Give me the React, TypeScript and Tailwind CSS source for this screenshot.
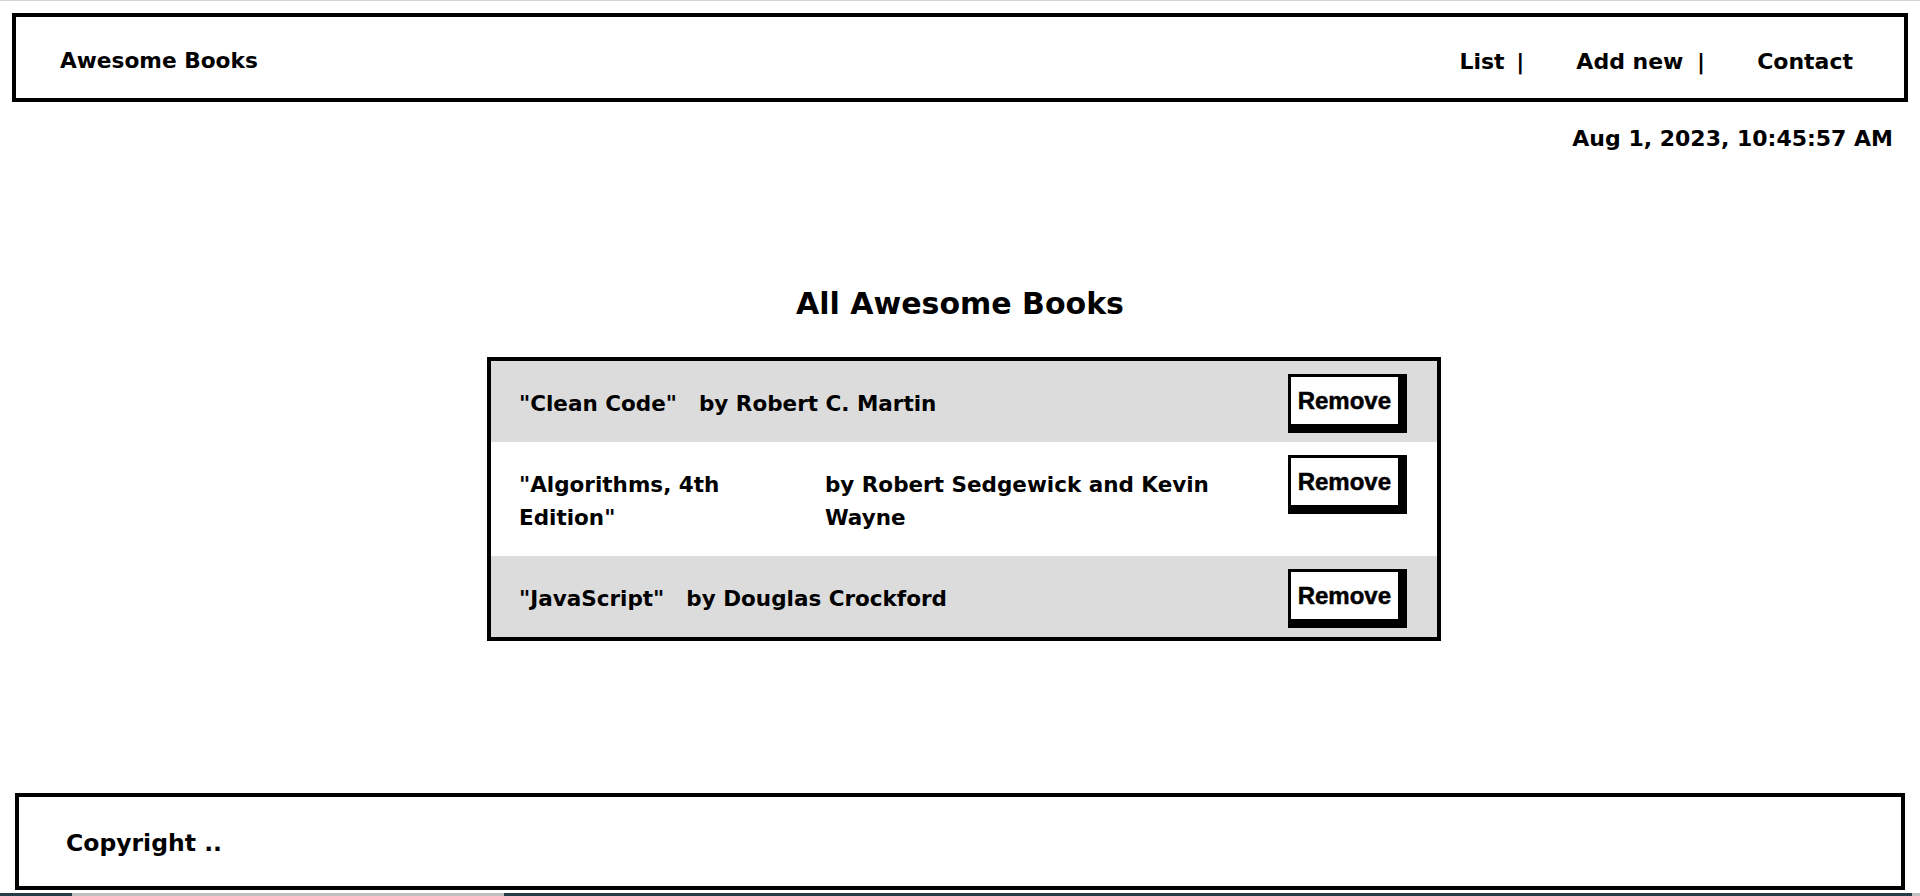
import React from "react";

type Book = {
  title: string;
  author: string;
};

const books: Book[] = [
  { title: "Clean Code", author: "Robert C. Martin" },
  { title: "Algorithms, 4th Edition", author: "Robert Sedgewick and Kevin Wayne" },
  { title: "JavaScript", author: "Douglas Crockford" },
];

export default function App() {
  return (
    <div className="h-[896px] overflow-hidden bg-white text-black font-['DejaVu_Sans',sans-serif] font-bold">
      <div className="h-px bg-[#d3d3d3]" />

      {/* header */}
      <header className="mx-[12px] mt-[12px] h-[89px] border-4 border-black flex items-center justify-between pl-[44px] pr-[51px] pt-[7px]">
        <h2 className="text-[21.7px]">Awesome Books</h2>
        <nav>
          <ul className="flex gap-[52px] text-[22px]">
            <li>
              List <span className="pl-[4px]">|</span>
            </li>
            <li>
              Add new <span className="pl-[6px]">|</span>
            </li>
            <li>Contact</li>
          </ul>
        </nav>
      </header>

      <p className="mt-[22px] mr-[27px] text-right text-[22px] leading-[30px]">
        Aug 1, 2023, 10:45:57 AM
      </p>

      {/* list */}
      <h1 className="mt-[130px] text-center text-[30px] leading-[40px]">
        All Awesome Books
      </h1>

      <div className="mt-[33px] flex justify-center">
        <ul className="ml-[8px] w-[954px] border-4 border-black">
          {books.map((book, i) => (
            <li
              key={book.title}
              className={
                i % 2 === 0
                  ? "flex items-start gap-[22px] pl-[28px] pr-[30px] pt-[13px] pb-[9px] bg-[#dcdcdc]"
                  : "flex items-start gap-[22px] pl-[28px] pr-[30px] pt-[13px] pb-[9px] bg-white"
              }
            >
              <p className="my-[13px] text-[21.5px] leading-[33px]">{`"${book.title}"`}</p>
              <p className="my-[13px] text-[21.5px] leading-[33px]">{`by ${book.author}`}</p>
              <button className="ml-auto shrink-0 bg-white border-t-[3px] border-l-[3px] border-r-[9px] border-b-[9px] border-black px-[7px] py-[10px] text-[24px] leading-[27px] font-['Liberation_Sans',Arial,sans-serif] font-bold [-webkit-text-stroke:0.5px_black]">
                Remove
              </button>
            </li>
          ))}
        </ul>
      </div>

      {/* footer */}
      <footer className="mx-[15px] mt-[152px] h-[97px] border-4 border-black flex items-center pl-[47px] pt-[5px]">
        <p className="text-[23.5px]">Copyright ..</p>
      </footer>

      <div className="mt-[3px] h-[3px] flex">
        <div className="w-[72px] bg-[#263d47]" />
        <div className="w-[432px] bg-[#c0c0c0]" />
        <div className="flex-1 bg-[#263d47]" />
        <div className="w-[8px] bg-[#c0c0c0]" />
      </div>
    </div>
  );
}
